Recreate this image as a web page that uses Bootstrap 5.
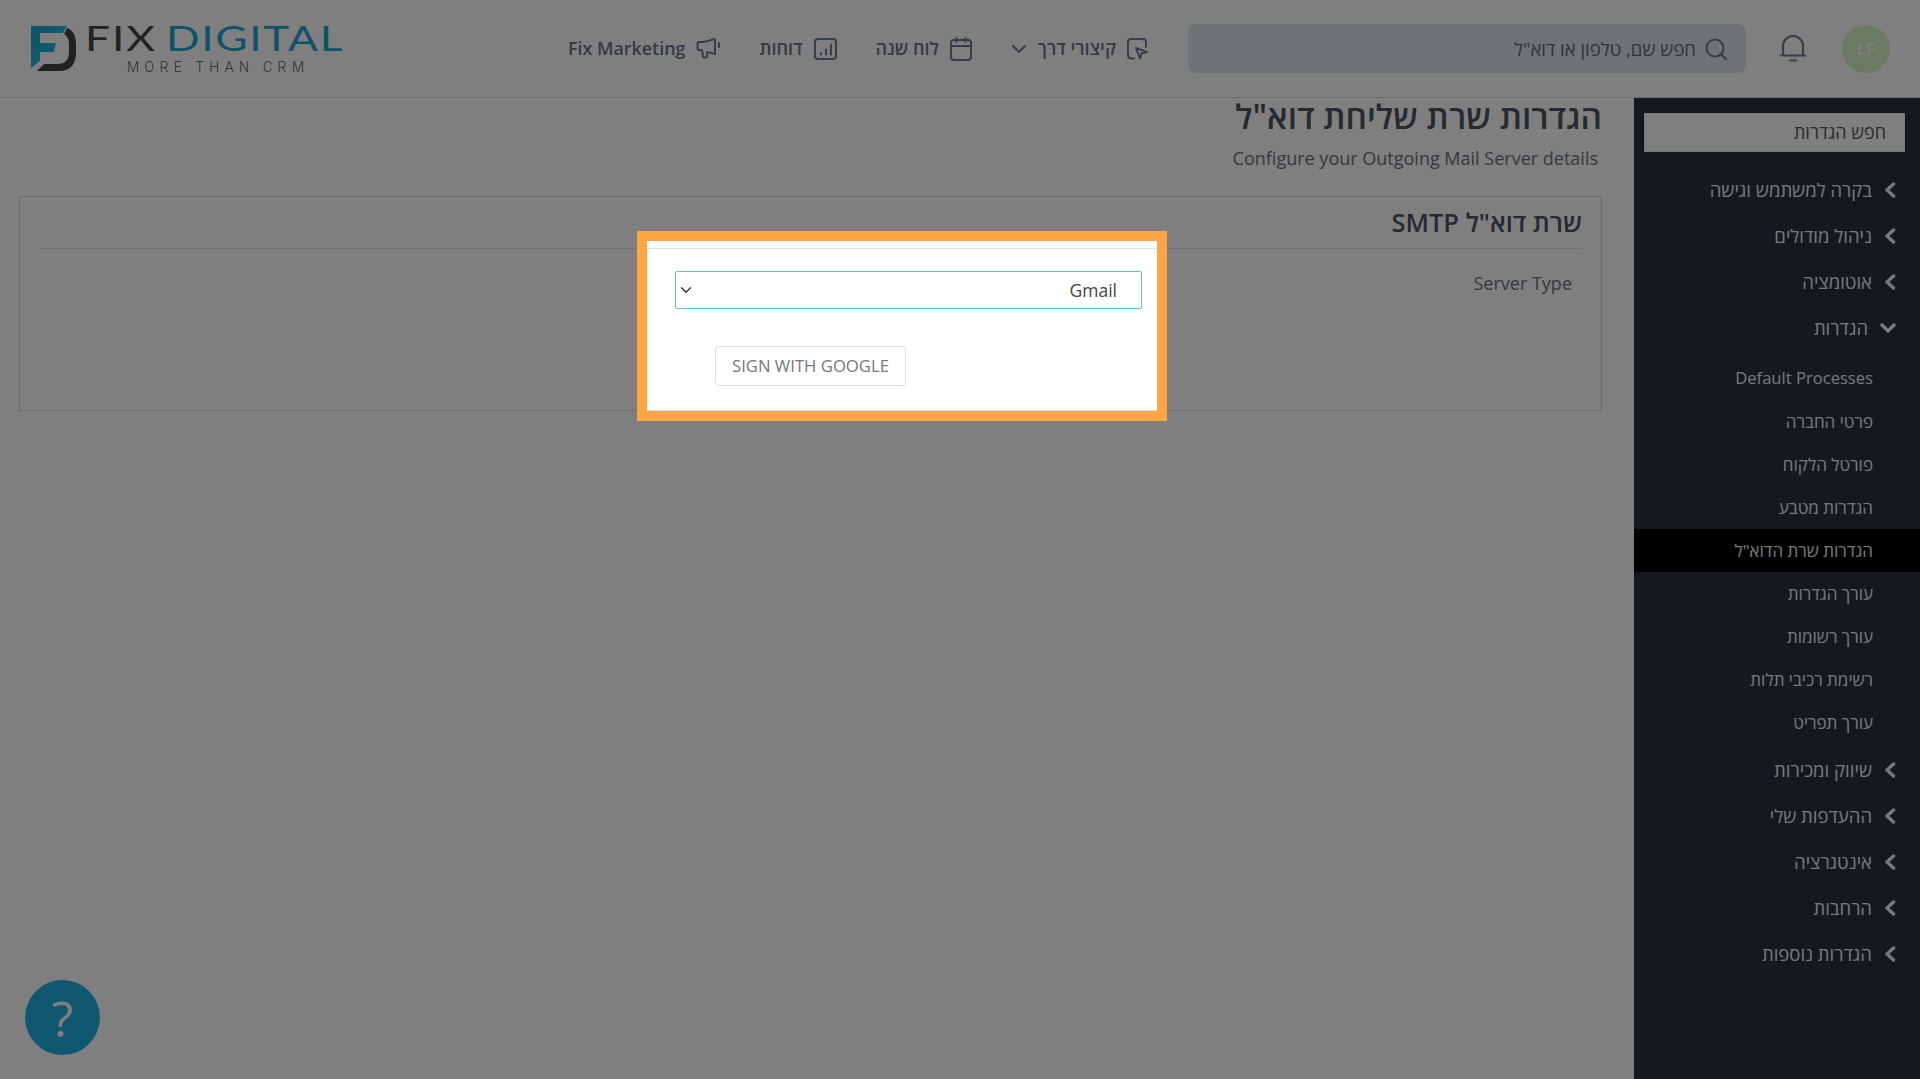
<!DOCTYPE html>
<html lang="he" dir="rtl">
<head>
  <meta charset="UTF-8" />
  <meta name="viewport" content="width=device-width, initial-scale=1.0"/>
  <title>הגדרות שרת שליחת דוא"ל</title>
  <link href="https://cdn.jsdelivr.net/npm/bootstrap@5.3.2/dist/css/bootstrap.min.css" rel="stylesheet" />
  <style>
    html, body {
      height: 100%;
      overflow: hidden;
    }

    body {
      font-family: "Open Sans", "Noto Sans", sans-serif;
      background-color: #fff;
      color: #4a5560;
    }

    .top-bar {
      height: 98px;
      border-bottom: 1px solid #dcdcdc;
      padding: 0 30px 0 30px;
    }

    .user-avatar {
      width: 48px;
      height: 48px;
      border-radius: 50%;
      background-color: #d6f5c6;
      color: #fff;
      font-size: 17px;
      font-weight: 600;
    }

    .bell-box {
      width: 26px;
      margin: 0 36px 0 34px;
    }

    .search-box {
      width: 558px;
      height: 49px;
      border-radius: 8px;
      background-color: #dde6ea;
      padding: 0 18px;
      font-size: 18.5px;
      color: #5d6a77;
      margin-left: 40px;
    }

    .top-link {
      font-size: 18px;
      font-weight: 600;
      color: #667587;
      margin-left: 39px;
      white-space: nowrap;
      gap: 11px;
    }

    .top-link svg {
      flex-shrink: 0;
    }

    .brand-logo {
      display: block;
    }

    .brand-logo svg {
      display: block;
      direction: ltr;
      overflow: visible;
    }

    .fix-word {
      font-size: 17.9px;
    }

    .page-body {
      height: 981px;
    }

    .side-menu {
      width: 286px;
      flex-shrink: 0;
      background-color: #28323c;
      color: #f0f0f0;
      padding-top: 15px;
      font-size: 18.5px;
    }

    .side-search {
      height: 39px;
      margin: 0 15px 15px 10px;
      padding: 0 18px;
      background-color: #fff;
      color: #555;
      border: 1px solid #eee;
      font-size: 18px;
    }

    .menu-top {
      height: 46px;
      padding-right: 24px;
      gap: 12px;
    }

    .menu-sub {
      height: 43px;
      padding-right: 47px;
      font-size: 17px;
    }

    .latin-sub {
      font-size: 16.6px;
    }

    .menu-sub.is-active {
      background-color: #000;
    }

    .sub-first {
      margin-top: 6px;
    }

    .sub-last {
      margin-bottom: 3px;
    }

    .main-area {
      padding: 0 32px 0 19px;
    }

    .page-title {
      font-size: 33.4px;
      font-weight: 600;
      color: #4a5560;
      margin: 0;
      line-height: 36px;
    }

    .page-sub {
      font-size: 18px;
      color: #66727e;
      margin: 12px 4px 0 0;
      line-height: 24px;
    }

    .server-card {
      margin-top: 26px;
      height: 215px;
      border: 1px solid #d9dee3;
      padding: 0 19px;
    }

    .server-head {
      height: 52px;
      line-height: 50px;
      border-bottom: 1px solid #dee2e6;
      font-size: 25.5px;
      font-weight: 600;
      color: #4a5560;
      margin: 0;
    }

    .server-row {
      margin-top: 22px;
    }

    .server-label {
      width: 440px;
      padding-right: 10px;
      font-size: 18px;
      color: #66727e;
      line-height: 24px;
    }

    .server-select {
      width: 467px;
      height: 38px;
      border: 1px solid #5bc0e8;
      border-radius: 2px;
      padding: 0 24px 0 24px;
      font-size: 17.5px;
      color: #444;
      background-position: left 2px center;
    }

    .server-select:focus {
      border-color: #5bc0e8;
      box-shadow: none;
    }

    .btn-slot {
      width: 467px;
      margin: 37px 440px 0 0;
      padding-left: 40px;
    }

    .google-btn {
      width: 191px;
      height: 40px;
      padding: 0;
      border: 1px solid #dee2e6;
      border-radius: 3px;
      background-color: #fff;
      color: #777;
      font-size: 16.7px;
    }

    .help-btn {
      position: absolute;
      left: 25px;
      bottom: 24px;
      width: 75px;
      height: 75px;
      border-radius: 50%;
      background-color: #1fb0de;
      color: #fff;
      font-size: 50px;
      line-height: 1;
    }

    .tour-spot {
      position: absolute;
      left: 637px;
      top: 231px;
      width: 530px;
      height: 190px;
      border: 10px solid #ffa544;
      box-shadow: 0 0 0 3000px rgba(0, 0, 0, 0.5);
      pointer-events: none;
    }
  </style>
</head>
<body>
  <header class="top-bar d-flex align-items-center">
    <div class="user-avatar d-flex align-items-center justify-content-center" dir="ltr">LF</div>
    <div class="bell-box d-flex">
      <svg width="26" height="27" viewBox="0 0 26 27" fill="none" stroke="#6a7c94" stroke-width="2.200" stroke-linecap="round" stroke-linejoin="round"><path d="M3 20V11a10 10 0 0 1 20 0v9"/><path d="M1 20.500h24"/><path d="M10 25.500h6"/></svg>
    </div>
    <div class="search-box d-flex align-items-center gap-2">
      <svg width="24" height="24" viewBox="0 0 24 24" fill="none" stroke="#777" stroke-width="2" stroke-linecap="round"><circle cx="11" cy="11" r="8.500"/><path d="M17.500 17.500l4.500 4.500"/></svg>
      <span>חפש שם, טלפון או דוא"ל</span>
    </div>
    <div class="top-link d-flex align-items-center">
      <svg width="21" height="22" viewBox="0 0 21 22" fill="none" stroke="#6a7c94" stroke-width="2" stroke-linecap="round" stroke-linejoin="round"><path d="M7 20.500H4a3 3 0 0 1-3-3V4a3 3 0 0 1 3-3h12a3 3 0 0 1 3 3v5"/><path d="M9 10l11 4-5.500 1.500L13 20.500z"/></svg>
      <span>קיצורי דרך</span>
      <svg width="16" height="10" viewBox="0 0 16 10" fill="none" stroke="#6a7c94" stroke-width="2" stroke-linecap="round" stroke-linejoin="round"><path d="M2 2l6 6 6-6"/></svg>
    </div>
    <div class="top-link d-flex align-items-center">
      <svg width="22" height="24" viewBox="0 0 22 24" fill="none" stroke="#6a7c94" stroke-width="2" stroke-linecap="round" stroke-linejoin="round"><rect x="1" y="3" width="20" height="20" rx="3"/><path d="M1 9h20M6.500 1v4M15.500 1v4"/></svg>
      <span>לוח שנה</span>
    </div>
    <div class="top-link d-flex align-items-center">
      <svg width="23" height="22" viewBox="0 0 23 22" fill="none" stroke="#6a7c94" stroke-width="2" stroke-linecap="round"><rect x="1" y="1" width="21" height="20" rx="3"/><path d="M7 16.500v-1.500M12 16.500v-5M17 16.500v-10"/></svg>
      <span>דוחות</span>
    </div>
    <div class="top-link d-flex align-items-center">
      <svg width="24" height="23" viewBox="0 0 24 23" fill="none" stroke="#6a7c94" stroke-width="2" stroke-linecap="round" stroke-linejoin="round"><path d="M19 2L8 5H3.500A2 2 0 0 0 1.500 7v4a2 2 0 0 0 2 2H6l1 6.500a1.200 1.200 0 0 0 1.200 1H10a1.200 1.200 0 0 0 1.200-1.200V15l7.800 2z"/><path d="M23 6v4"/></svg>
      <span class="fix-word">Fix Marketing</span>
    </div>
    <a href="#" class="me-auto brand-logo">
      <svg width="320" height="60" viewBox="0 0 320 60">
        <defs>
          <linearGradient id="logoFade" x1="0" y1="0" x2="1" y2="1">
            <stop offset="0" stop-color="#1fa6d0"/>
            <stop offset="1" stop-color="#26c0e8"/>
          </linearGradient>
        </defs>
        <path d="M1 7H37L33 14H10V24H26L24 33H10V42L1 49Z" fill="url(#logoFade)"/>
        <path d="M37 9C44 11 46 18 46 26V34C46 45 40 52 30 52H7L14 45H28C35 45 39 41 39 33V25C39 20 37 17 34 15Z" fill="#444"/>
        <g transform="scale(1.3 1)" font-family="Lato, 'Liberation Sans', sans-serif" font-size="34">
          <text x="42.300" y="32" letter-spacing="1.500" fill="#444">FIX</text>
          <text x="104.600" y="32" letter-spacing="1.300" fill="#1fa6d0">DIGITAL</text>
        </g>
        <text x="97" y="53" font-family="Roboto, 'Liberation Sans', sans-serif" font-size="14" font-weight="300" textLength="177" fill="#555">MORE THAN CRM</text>
      </svg>
    </a>
  </header>

  <div class="page-body d-flex">
    <aside class="side-menu">
      <div class="side-search d-flex align-items-center">חפש הגדרות</div>
      <div class="menu-top d-flex align-items-center"><svg width="12" height="16" viewBox="0 0 12 16" fill="none" stroke="#f0f0f0" stroke-width="3.500" stroke-linecap="round" stroke-linejoin="round"><path d="M9.500 2L3 8l6.500 6"/></svg><span>בקרה למשתמש וגישה</span></div>
      <div class="menu-top d-flex align-items-center"><svg width="12" height="16" viewBox="0 0 12 16" fill="none" stroke="#f0f0f0" stroke-width="3.500" stroke-linecap="round" stroke-linejoin="round"><path d="M9.500 2L3 8l6.500 6"/></svg><span>ניהול מודולים</span></div>
      <div class="menu-top d-flex align-items-center"><svg width="12" height="16" viewBox="0 0 12 16" fill="none" stroke="#f0f0f0" stroke-width="3.500" stroke-linecap="round" stroke-linejoin="round"><path d="M9.500 2L3 8l6.500 6"/></svg><span>אוטומציה</span></div>
      <div class="menu-top d-flex align-items-center"><svg width="16" height="12" viewBox="0 0 16 12" fill="none" stroke="#f0f0f0" stroke-width="3.500" stroke-linecap="round" stroke-linejoin="round"><path d="M2 3l6 6 6-6"/></svg><span>הגדרות</span></div>
      <div class="menu-sub latin-sub sub-first d-flex align-items-center">Default Processes</div>
      <div class="menu-sub d-flex align-items-center">פרטי החברה</div>
      <div class="menu-sub d-flex align-items-center">פורטל הלקוח</div>
      <div class="menu-sub d-flex align-items-center">הגדרות מטבע</div>
      <div class="menu-sub is-active d-flex align-items-center">הגדרות שרת הדוא"ל</div>
      <div class="menu-sub d-flex align-items-center">עורך הגדרות</div>
      <div class="menu-sub d-flex align-items-center">עורך רשומות</div>
      <div class="menu-sub d-flex align-items-center">רשימת רכיבי תלות</div>
      <div class="menu-sub sub-last d-flex align-items-center">עורך תפריט</div>
      <div class="menu-top d-flex align-items-center"><svg width="12" height="16" viewBox="0 0 12 16" fill="none" stroke="#f0f0f0" stroke-width="3.500" stroke-linecap="round" stroke-linejoin="round"><path d="M9.500 2L3 8l6.500 6"/></svg><span>שיווק ומכירות</span></div>
      <div class="menu-top d-flex align-items-center"><svg width="12" height="16" viewBox="0 0 12 16" fill="none" stroke="#f0f0f0" stroke-width="3.500" stroke-linecap="round" stroke-linejoin="round"><path d="M9.500 2L3 8l6.500 6"/></svg><span>ההעדפות שלי</span></div>
      <div class="menu-top d-flex align-items-center"><svg width="12" height="16" viewBox="0 0 12 16" fill="none" stroke="#f0f0f0" stroke-width="3.500" stroke-linecap="round" stroke-linejoin="round"><path d="M9.500 2L3 8l6.500 6"/></svg><span>אינטגרציה</span></div>
      <div class="menu-top d-flex align-items-center"><svg width="12" height="16" viewBox="0 0 12 16" fill="none" stroke="#f0f0f0" stroke-width="3.500" stroke-linecap="round" stroke-linejoin="round"><path d="M9.500 2L3 8l6.500 6"/></svg><span>הרחבות</span></div>
      <div class="menu-top d-flex align-items-center"><svg width="12" height="16" viewBox="0 0 12 16" fill="none" stroke="#f0f0f0" stroke-width="3.500" stroke-linecap="round" stroke-linejoin="round"><path d="M9.500 2L3 8l6.500 6"/></svg><span>הגדרות נוספות</span></div>
    </aside>

    <main class="main-area flex-grow-1">
      <h1 class="page-title">הגדרות שרת שליחת דוא"ל</h1>
      <p class="page-sub">Configure your Outgoing Mail Server details</p>
      <section class="server-card">
        <h2 class="server-head">שרת דוא"ל SMTP</h2>
        <div class="server-row d-flex">
          <div class="server-label">Server Type</div>
          <select class="form-select server-select"><option>Gmail</option></select>
        </div>
        <div class="btn-slot d-flex justify-content-end">
          <button type="button" class="btn google-btn">SIGN WITH GOOGLE</button>
        </div>
      </section>
    </main>
  </div>

  <div class="help-btn d-flex align-items-center justify-content-center">?</div>
  <div class="tour-spot"></div>
</body>
</html>
